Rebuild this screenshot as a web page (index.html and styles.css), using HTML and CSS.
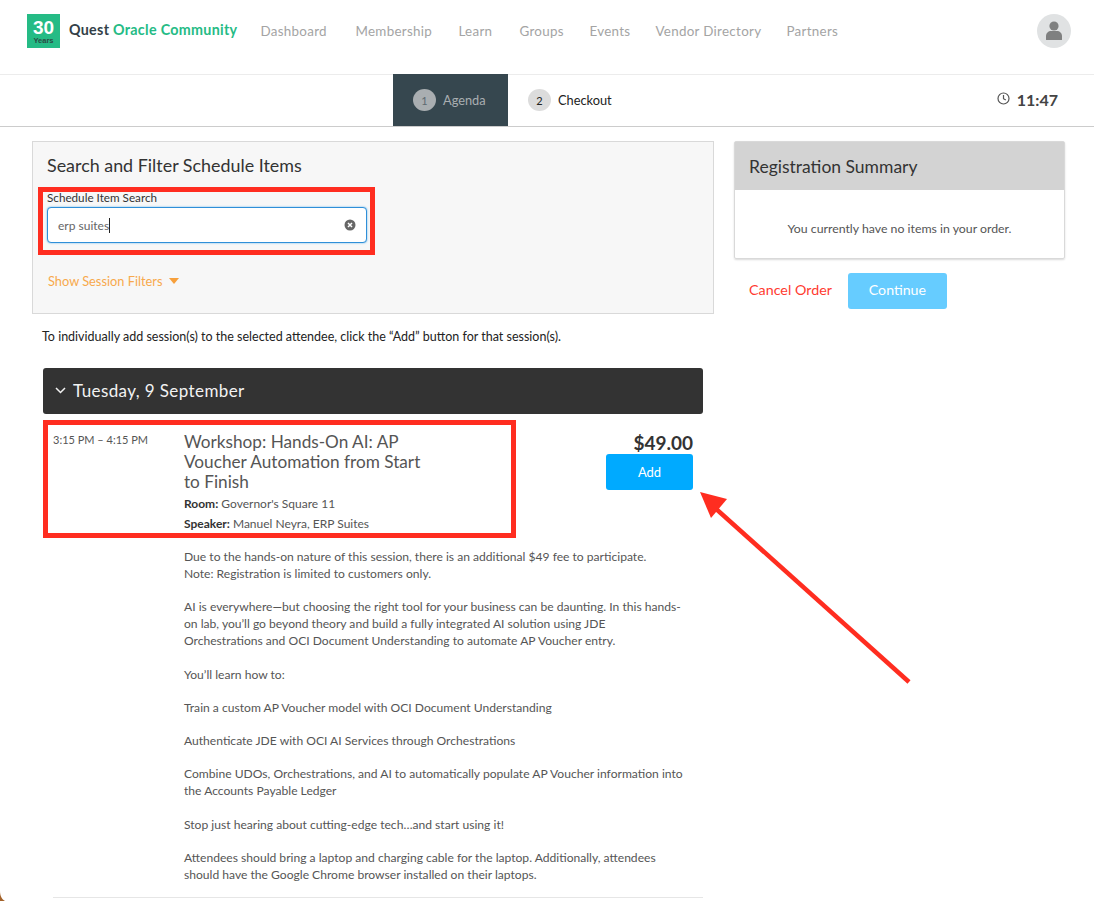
FILE: index.html
```html
<!DOCTYPE html>
<html lang="en">
<head>
    <meta charset="UTF-8">
    <meta name="viewport" content="width=device-width, initial-scale=1.0">
    <title>Agenda - Quest Oracle Community</title>
    <link rel="stylesheet" href="styles.css">
</head>
<body>
    <header class="topbar">
        <div class="logo-badge"><span class="logo-num">30</span><span class="logo-years">Years</span></div>
        <div class="logo-text">Quest <span class="logo-green">Oracle Community</span></div>
        <nav class="nav">
            <a>Dashboard</a>
            <a>Membership</a>
            <a>Learn</a>
            <a>Groups</a>
            <a>Events</a>
            <a>Vendor Directory</a>
            <a>Partners</a>
        </nav>
        <div class="avatar">
            <svg width="16" height="20" viewBox="0 0 16 20"><circle cx="8" cy="5" r="4.6" fill="#7f8080"/><path d="M0.5 19c-.5 0-.5-.4-.5-1v-3c0-3 2.500-5 5-5h6c2.500 0 5 2 5 5v3c0 .6 0 1-.5 1z" fill="#7f8080"/></svg>
        </div>
    </header>

    <div class="stepbar">
        <div class="step step-active"><span class="step-num">1</span>Agenda</div>
        <div class="step"><span class="step-num">2</span>Checkout</div>
        <div class="timer">
            <svg width="13" height="13" viewBox="0 0 13 13" fill="none" stroke="#555" stroke-width="1.200"><circle cx="6.500" cy="6.500" r="5.500"/><path d="M6.500 3v3.700l2.300 1.400"/></svg>
            <span>11:47</span>
        </div>
    </div>

    <main class="layout">
        <div class="left">
            <section class="filter-box">
                <h2>Search and Filter Schedule Items</h2>
                <label class="search-label">Schedule Item Search</label>
                <div class="search-input">
                    <span class="search-value">erp suites</span>
                    <svg class="clear-icon" width="12" height="12" viewBox="0 0 12 12"><circle cx="6" cy="6" r="5.500" fill="#666"/><path d="M4 4l4 4M8 4l-4 4" stroke="#fff" stroke-width="1.500"/></svg>
                </div>
                <div class="show-filters">Show Session Filters <span class="caret"></span></div>
            </section>

            <p class="hint">To individually add session(s) to the selected attendee, click the “Add” button for that session(s).</p>

            <div class="day-bar">
                <svg width="11" height="7" viewBox="0 0 11 7" fill="none" stroke="#f2f2f2" stroke-width="1.500"><path d="M1 1l4.500 4.500L10 1"/></svg>
                Tuesday, 9 September
            </div>

            <article class="session">
                <div class="session-head">
                    <div class="session-time">3:15 PM – 4:15 PM</div>
                    <div class="session-info">
                        <h3>Workshop: Hands-On AI: AP Voucher Automation from Start to Finish</h3>
                        <div class="meta"><b>Room:</b> Governor's Square 11</div>
                        <div class="meta"><b>Speaker:</b> Manuel Neyra, ERP Suites</div>
                    </div>
                    <div class="session-buy">
                        <div class="price">$49.00</div>
                        <button class="add-btn">Add</button>
                    </div>
                </div>
                <div class="session-desc">
                    <p>Due to the hands-on nature of this session, there is an additional $49 fee to participate.<br>Note: Registration is limited to customers only.</p>
                    <p>AI is everywhere—but choosing the right tool for your business can be daunting. In this hands-<br>on lab, you’ll go beyond theory and build a fully integrated AI solution using JDE<br>Orchestrations and OCI Document Understanding to automate AP Voucher entry.</p>
                    <p>You’ll learn how to:</p>
                    <p>Train a custom AP Voucher model with OCI Document Understanding</p>
                    <p>Authenticate JDE with OCI AI Services through Orchestrations</p>
                    <p>Combine UDOs, Orchestrations, and AI to automatically populate AP Voucher information into<br>the Accounts Payable Ledger</p>
                    <p>Stop just hearing about cutting-edge tech…and start using it!</p>
                    <p>Attendees should bring a laptop and charging cable for the laptop. Additionally, attendees<br>should have the Google Chrome browser installed on their laptops.</p>
                </div>
                <hr class="session-rule">
            </article>
        </div>

        <aside class="right">
            <section class="summary">
                <h2>Registration Summary</h2>
                <p>You currently have no items in your order.</p>
            </section>
            <div class="summary-actions">
                <a class="cancel">Cancel Order</a>
                <button class="continue-btn">Continue</button>
            </div>
        </aside>
    </main>

    <!-- annotations drawn on top of the screenshot -->
    <div class="mark mark-search"></div>
    <div class="mark mark-session"></div>
    <svg class="arrow" width="220" height="200" viewBox="0 0 220 200">
        <path d="M210 191L15 16" stroke="#ff2d20" stroke-width="4.500" fill="none"/>
        <path d="M1 1L28 8L12 27Z" fill="#ff2d20"/>
    </svg>
    <svg class="corner" width="6" height="10" viewBox="0 0 6 10"><path d="M0 0C0 5 2 8.500 5 10H0Z" fill="#a3622a"/></svg>
</body>
</html>
```

FILE: styles.css
```css
html, body {
    height: 901px;
    overflow: hidden;
}
body {
    font-family: 'Lato', sans-serif;
    margin: 0;
    background: #fff;
    color: #444;
    position: relative;
}
.topbar {
    height: 75px;
    box-sizing: border-box;
    border-bottom: 1px solid #ececec;
    display: flex;
    align-items: flex-start;
    padding: 14px 23px 0 27px;
}
.logo-badge {
    width: 33px;
    height: 34px;
    background: #25bb85;
    color: #fff;
    display: flex;
    flex-direction: column;
    align-items: center;
    line-height: 1;
}
.logo-num {
    font-family: 'Liberation Sans', sans-serif;
    font-size: 19px;
    font-weight: bold;
    margin-top: 4px;
}
.logo-years {
    font-family: 'Liberation Sans', sans-serif;
    font-size: 7.500px;
    font-weight: bold;
    color: #2b4a44;
}
.logo-text {
    font-size: 14.300px;
    line-height: 18px;
    font-weight: 700;
    color: #333f48;
    margin-left: 9px;
    margin-top: 7px;
    letter-spacing: 0.3px;
}
.logo-green {
    color: #25bb85;
}
.nav {
    display: grid;
    grid-template-columns: 69px 77px 35px 44px 40px 105px 50px;
    gap: 26px;
    margin-left: 23px;
    margin-top: 9px;
    font-size: 13.400px;
    line-height: 17px;
    color: #a4a4a4;
    letter-spacing: 0.3px;
    white-space: nowrap;
}
.avatar {
    width: 34px;
    height: 34px;
    border-radius: 50%;
    background: #e0e2e3;
    margin-left: auto;
    display: flex;
    align-items: center;
    justify-content: center;
}
.stepbar {
    height: 52px;
    box-sizing: border-box;
    border-bottom: 1px solid #ccc;
    display: flex;
    padding-left: 393px;
    padding-right: 36px;
    font-size: 12.800px;
}
.step {
    height: 52px;
    display: flex;
    align-items: center;
    gap: 7px;
    color: #222;
    padding-left: 20px;
    margin-top: -1px;
}
.step-active {
    width: 115px;
    box-sizing: border-box;
    background: #36474f;
    color: #a9aeb1;
    padding-left: 20px;
}
.step-num {
    width: 23px;
    height: 22px;
    border-radius: 50%;
    background: #dcdcdc;
    display: flex;
    align-items: center;
    justify-content: center;
    font-size: 11px;
}
.step-active .step-num {
    background: #a9aeb1;
    color: #5d6a70;
}
.timer {
    margin-left: auto;
    display: flex;
    align-items: center;
    gap: 7px;
    font-size: 16px;
    font-weight: 700;
    color: #444;
    padding-bottom: 2px;
}
.timer svg {
    margin-bottom: 3px;
}
.layout {
    display: flex;
    gap: 20px;
    padding: 14px 29px 0 32px;
    align-items: flex-start;
}
.left {
    width: 682px;
    flex: none;
}
.right {
    flex: 1;
}
.filter-box {
    height: 173px;
    box-sizing: border-box;
    border: 1px solid #d9d9d9;
    background: #f7f7f7;
    padding: 12px 14px 0;
}
.filter-box h2 {
    margin: 0;
    font-size: 17.900px;
    font-weight: 400;
    color: #333;
    line-height: 23px;
}
.search-label {
    display: block;
    font-size: 11.700px;
    color: #333;
    margin-top: 14px;
    line-height: 13px;
}
.search-input {
    height: 36px;
    box-sizing: border-box;
    margin-top: 3px;
    width: 320px;
    background: #fff;
    border: 1px solid #2f8fd8;
    border-radius: 4px;
    box-shadow: 0 0 2px #5aaeea;
    display: flex;
    align-items: center;
    justify-content: space-between;
    padding: 0 10px 0 10px;
    font-size: 12px;
    color: #666;
}
.search-value {
    border-right: 1px solid #222;
    line-height: 15px;
}
.show-filters {
    margin-top: 30px;
    color: #f7a94c;
    font-size: 12.800px;
    display: flex;
    align-items: center;
    gap: 7px;
    margin-left: 1px;
}
.caret {
    width: 0;
    height: 0;
    border-left: 5px solid transparent;
    border-right: 5px solid transparent;
    border-top: 6px solid #f7a03c;
}
.hint {
    margin: 16px 0 0 10px;
    font-size: 12.500px;
    line-height: 14px;
    color: #222;
}
.day-bar {
    height: 46px;
    box-sizing: border-box;
    margin: 24px 11px 0;
    background: #333;
    border-radius: 3px;
    color: #f2f2f2;
    font-size: 17px;
    display: flex;
    align-items: center;
    gap: 7px;
    padding: 0 0 1px 12px;
    letter-spacing: 0.4px;
}
.session {
    margin: 0 11px;
}
.session-head {
    display: flex;
    padding: 19px 10px 0 10px;
}
.session-time {
    width: 131px;
    flex: none;
    font-size: 11px;
    line-height: 14px;
    color: #555;
}
.session-info {
    width: 250px;
    flex: none;
    margin-top: -1px;
}
.session-info h3 {
    margin: 0 0 2px;
    font-size: 17.200px;
    font-weight: 400;
    line-height: 20px;
    color: #555;
}
.meta {
    font-size: 12px;
    line-height: 20px;
    color: #555;
}
.meta b {
    color: #333;
}
.session-buy {
    margin-left: auto;
    display: flex;
    flex-direction: column;
    align-items: flex-end;
}
.price {
    font-size: 19px;
    font-weight: 700;
    color: #333;
    line-height: 20px;
}
.add-btn {
    width: 87px;
    height: 36px;
    margin-top: 1px;
    border: none;
    border-radius: 3px;
    background: #00aaff;
    color: #fff;
    font-family: inherit;
    font-size: 13px;
}
.session-desc {
    margin: 14px 0 0 141px;
    width: 530px;
    font-size: 12.100px;
    line-height: 17px;
    color: #555;
}
.session-desc p {
    margin: 0 0 16.300px;
}
.session-rule {
    border: none;
    border-top: 1px solid #e6e6e6;
    margin: -2px 0 0 10px;
}
.summary {
    height: 118px;
    box-sizing: border-box;
    border: 1px solid #d9d9d9;
    border-radius: 2px;
    box-shadow: 0 1px 2px rgba(0, 0, 0, 0.15);
}
.summary h2 {
    margin: 0;
    height: 48px;
    background: #d3d3d3;
    padding-left: 14px;
    font-size: 17.500px;
    font-weight: 400;
    line-height: 49px;
    color: #333;
}
.summary p {
    margin: 32px 0 0;
    font-size: 12.300px;
    line-height: 14px;
    text-align: center;
    color: #555;
}
.summary-actions {
    display: flex;
    align-items: center;
    gap: 16px;
    margin-top: 14px;
    padding-left: 15px;
}
.cancel {
    color: #ff3b30;
    font-size: 14.300px;
    margin-bottom: 3px;
}
.continue-btn {
    width: 99px;
    height: 36px;
    border: none;
    border-radius: 3px;
    background: #66ccff;
    color: #fff;
    font-family: inherit;
    font-size: 14.200px;
    padding-bottom: 4px;
}
.mark {
    position: absolute;
    border: 5px solid #ff2d20;
    box-sizing: border-box;
}
.mark-search {
    left: 38px;
    top: 187px;
    width: 337px;
    height: 68px;
}
.mark-session {
    left: 43px;
    top: 420px;
    width: 473px;
    height: 118px;
}
.arrow {
    position: absolute;
    left: 699px;
    top: 491px;
}
.corner {
    position: absolute;
    left: 0;
    top: 891px;
}
```
